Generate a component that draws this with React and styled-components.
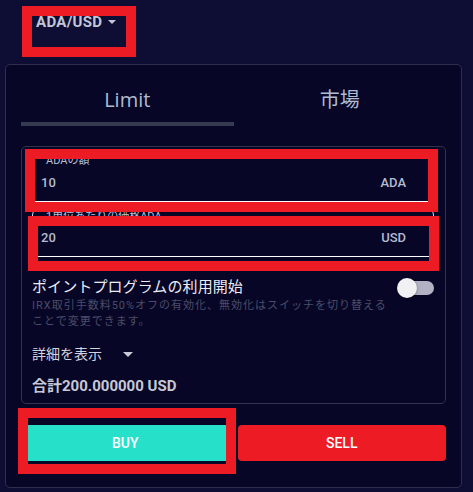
import React from 'react'
import styled, { createGlobalStyle } from 'styled-components'

const GlobalStyle = createGlobalStyle`
  html, body {
    margin: 0;
    padding: 0;
    background: #0e0e34;
  }
  * { box-sizing: border-box; }
`

const Page = styled.div`
  width: 473px;
  height: 492px;
  background: #0e0e34;
  font-family: Roboto, "Noto Sans CJK JP", sans-serif;
  overflow: hidden;
`

const Header = styled.div`
  position: relative;
  height: 64px;
  padding: 13px 0 0 36px;
`

const Pair = styled.div`
  display: flex;
  align-items: center;
  gap: 6px;
  font-size: 15px;
  font-weight: 700;
  letter-spacing: 0.3px;
  line-height: 18px;
  color: #c3c6d6;
`

const Caret = styled.span`
  width: 0;
  height: 0;
  border-left: ${p => p.size}px solid transparent;
  border-right: ${p => p.size}px solid transparent;
  border-top: ${p => p.size}px solid ${p => p.color};
`

// red annotation boxes lying over the page
const Mark = styled.div`
  position: absolute;
  top: ${p => p.top}px;
  left: ${p => p.left}px;
  width: ${p => p.w}px;
  height: ${p => p.h}px;
  border: 10px solid #ed1c24;
  pointer-events: none;
  z-index: 5;
`

const Card = styled.div`
  margin-left: 5px;
  width: 457px;
  height: 424px;
  background: #080626;
  border: 1px solid #2f2f4b;
  border-radius: 5px;
  padding: 0 15px 25px;
`

const Tabs = styled.div`
  display: grid;
  grid-template-columns: 1fr 1fr;
`

const Tab = styled.div`
  padding: 21px 0 8px;
  text-align: center;
  font-family: "Open Sans", "Noto Sans CJK JP", sans-serif;
  font-size: 20px;
  line-height: 28px;
  color: #aebbd0;
  border-bottom: 4px solid ${p => (p.active ? '#363a51' : 'transparent')};
`

const FormBox = styled.div`
  position: relative;
  margin-top: 20px;
  border: 1px solid #33334f;
  border-radius: 5px;
  padding: 6px 11px 7px 10px;
`

const Field = styled.div`
  position: relative;
  border: 1px solid ${p => (p.outlined ? 'rgba(255,255,255,0.85)' : 'transparent')};
  border-radius: 6px;
  margin-top: ${p => p.gap}px;
  padding-bottom: ${p => (p.outlined ? 10 : 0)}px;
`

const Label = styled.div`
  padding-left: 13px;
  font-size: 11px;
  line-height: 14px;
  color: #b8bfd2;
  white-space: nowrap;
`

const InputRow = styled.div`
  display: flex;
  justify-content: space-between;
  margin-top: ${p => p.gap}px;
  padding: 0 27px 9px 8px;
  border-bottom: 1px solid #ffffff;
  font-size: 13px;
  font-weight: 500;
  line-height: 18px;
  color: #b3bbd1;
`

const ToggleRow = styled.div`
  display: flex;
  justify-content: space-between;
  align-items: flex-start;
  margin-top: 8px;
`

const ToggleText = styled.div`
  width: 360px;
`

const ToggleTitle = styled.div`
  font-size: 15px;
  line-height: 22px;
  color: #ecebf4;
  letter-spacing: 0.1px;
`

const ToggleHint = styled.div`
  font-size: 11px;
  line-height: 16px;
  letter-spacing: 1px;
  color: #4a4d69;
`

const Switch = styled.div`
  position: relative;
  width: 37px;
  height: 20px;
  margin-top: 2px;
`

const Track = styled.div`
  position: absolute;
  left: 5px;
  top: 3px;
  width: 32px;
  height: 14px;
  border-radius: 7px;
  background: #b3b2c4;
`

const Thumb = styled.div`
  position: absolute;
  left: 0;
  top: 0;
  width: 20px;
  height: 20px;
  border-radius: 50%;
  background: #f1f1f3;
  box-shadow: 0 1px 3px rgba(0, 0, 0, 0.4);
`

const Details = styled.div`
  display: flex;
  align-items: center;
  gap: 21px;
  margin-top: 14px;
  font-size: 14px;
  line-height: 20px;
  color: #d2d4e0;
`

const Total = styled.div`
  margin-top: 12px;
  font-size: 15px;
  font-weight: 700;
  line-height: 20px;
  color: #c6c8d6;
`

const Actions = styled.div`
  position: relative;
  display: grid;
  grid-template-columns: 1fr 1fr;
  gap: 8px;
  margin-top: 21px;
`

const ActionButton = styled.button`
  height: 36px;
  border: none;
  border-radius: 4px;
  background: ${p => p.bg};
  color: #ffffff;
  font-family: Roboto, sans-serif;
  font-size: 14px;
  font-weight: 500;
  cursor: pointer;
`

const App = () => {
  return (
    <Page>
      <GlobalStyle />
      <Header>
        <Pair>
          ADA/USD <Caret size={4} color="#c3c6d6" />
        </Pair>
        <Mark top={6} left={22} w={114} h={51} />
      </Header>
      <Card>
        <Tabs>
          <Tab active>Limit</Tab>
          <Tab>市場</Tab>
        </Tabs>
        <FormBox>
          <Field gap={0}>
            <Label>ADAの額</Label>
            <InputRow gap={6}>
              <span>10</span>
              <span>ADA</span>
            </InputRow>
          </Field>
          <Field outlined gap={6}>
            <Label>1単位あたりの価格ADA</Label>
            <InputRow gap={5}>
              <span>20</span>
              <span>USD</span>
            </InputRow>
          </Field>
          <ToggleRow>
            <ToggleText>
              <ToggleTitle>ポイントプログラムの利用開始</ToggleTitle>
              <ToggleHint>
                IRX取引手数料50%オフの有効化、無効化はスイッチを切り替えることで変更できます。
              </ToggleHint>
            </ToggleText>
            <Switch>
              <Track />
              <Thumb />
            </Switch>
          </ToggleRow>
          <Details>
            詳細を表示 <Caret size={5} color="#c9cbd8" />
          </Details>
          <Total>合計200.000000 USD</Total>
          <Mark top={2} left={3} w={413} h={63} />
          <Mark top={69} left={6} w={411} h={55} />
        </FormBox>
        <Actions>
          <ActionButton bg="#26e0c9">BUY</ActionButton>
          <ActionButton bg="#ed1c24">SELL</ActionButton>
          <Mark top={-17} left={-3} w={218} h={66} />
        </Actions>
      </Card>
    </Page>
  )
}

export default App
